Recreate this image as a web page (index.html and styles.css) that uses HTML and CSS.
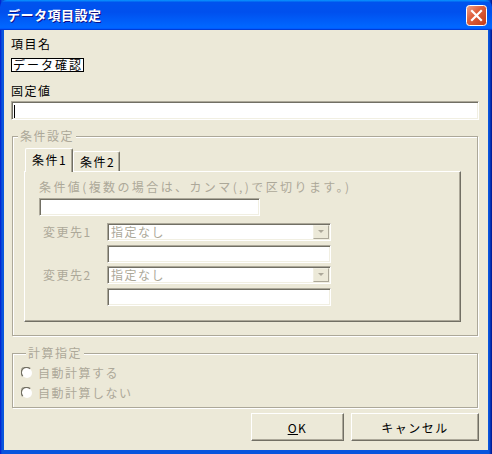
FILE: index.html
```html
<!DOCTYPE html>
<html lang="ja">
<head>
    <meta charset="UTF-8">
    <title>データ項目設定</title>
    <link rel="stylesheet" href="styles.css">
</head>
<body>
    <div class="window">
        <div class="titlebar">
            <span class="title">データ項目設定</span>
            <span class="close">
                <svg width="21" height="21" viewBox="0 0 21 21">
                    <defs>
                        <linearGradient id="cg" x1="0" y1="0" x2="1" y2="1">
                            <stop offset="0" stop-color="#F0A48C"/>
                            <stop offset="0.4" stop-color="#E0623F"/>
                            <stop offset="1" stop-color="#C33A16"/>
                        </linearGradient>
                    </defs>
                    <rect x="0.5" y="0.5" width="20" height="20" rx="3" fill="url(#cg)" stroke="#FFFFFF"/>
                    <path d="M6 6 L15 15 M15 6 L6 15" stroke="#FFFFFF" stroke-width="2.2" stroke-linecap="square"/>
                </svg>
            </span>
        </div>
        <div class="body">
            <div class="label">項目名</div>
            <div class="namebox">データ確認</div>
            <div class="label label-fixed">固定値</div>
            <div class="textbox fixed-input"><span class="caret"></span></div>

            <fieldset class="group cond-group">
                <legend>条件設定</legend>
                <div class="tabs">
                    <div class="tab active">条件1</div>
                    <div class="tab">条件2</div>
                </div>
                <div class="tab-panel">
                    <div class="note">条件値(複数の場合は、カンマ(,)で区切ります。)</div>
                    <div class="textbox cond-input"></div>
                    <div class="dest-row">
                        <span class="dest-label">変更先1</span>
                        <div class="dest-fields">
                            <div class="textbox combo"><span>指定なし</span><span class="drop"></span></div>
                            <div class="textbox dest-input"></div>
                        </div>
                    </div>
                    <div class="dest-row">
                        <span class="dest-label">変更先2</span>
                        <div class="dest-fields">
                            <div class="textbox combo"><span>指定なし</span><span class="drop"></span></div>
                            <div class="textbox dest-input"></div>
                        </div>
                    </div>
                </div>
            </fieldset>

            <fieldset class="group calc-group">
                <legend>計算指定</legend>
                <div class="radio">
                    <svg width="12" height="12" viewBox="0 0 12 12">
                        <circle cx="6" cy="6" r="5" fill="#FFFFFF"/>
                        <path d="M1.8 9 A5 5 0 0 1 9 1.8" fill="none" stroke="#716F64" stroke-width="1.3"/>
                        <path d="M1 9.5 A5.6 5.6 0 0 1 9.5 1" fill="none" stroke="#ACA899" stroke-width="0.8"/>
                    </svg>
                    <span>自動計算する</span>
                </div>
                <div class="radio">
                    <svg width="12" height="12" viewBox="0 0 12 12">
                        <circle cx="6" cy="6" r="5" fill="#FFFFFF"/>
                        <path d="M1.8 9 A5 5 0 0 1 9 1.8" fill="none" stroke="#716F64" stroke-width="1.3"/>
                        <path d="M1 9.5 A5.6 5.6 0 0 1 9.5 1" fill="none" stroke="#ACA899" stroke-width="0.8"/>
                    </svg>
                    <span>自動計算しない</span>
                </div>
            </fieldset>

            <div class="buttons">
                <button class="btn ok"><u>O</u>K</button>
                <button class="btn cancel">キャンセル</button>
            </div>
        </div>
    </div>
</body>
</html>
```

FILE: styles.css
```css
    body {
        margin: 0;
        width: 492px;
        height: 454px;
        overflow: hidden;
        font-family: "Noto Sans CJK JP", "Noto Sans", sans-serif;
        font-size: 12px;
        letter-spacing: 1.5px;
        color: #000000;
    }
    .window {
        width: 492px;
        height: 454px;
        background: linear-gradient(to right, #0019CF 0, #0855DD 2px, #0855DD 489px, #00138C 492px);
        display: flex;
        flex-direction: column;
    }
    .titlebar {
        height: 30px;
        flex: none;
        display: flex;
        justify-content: space-between;
        align-items: flex-start;
        padding: 0 5px 0 7px;
        background: linear-gradient(to bottom, #0997FF 0, #0053EE 8%, #0050EE 40%, #0066FF 88%, #0066FF 93%, #005BFF 95%, #003DD7 96%, #003DD7 100%);
        border-radius: 7px 7px 0 0;
    }
    .title {
        color: #ffffff;
        font-weight: bold;
        font-size: 13px;
        letter-spacing: 0.5px;
        line-height: 30px;
        text-shadow: 1px 1px #0F1089;
    }
    .close {
        margin-top: 5px;
        width: 21px;
        height: 21px;
    }
    .close svg {
        display: block;
    }
    .body {
        flex: 1;
        margin: 0 4px 4px 4px;
        padding: 7px 9px 0 7px;
        background-color: #ECE9D8;
        display: flex;
        flex-direction: column;
    }
    .label {
        line-height: 14px;
        height: 14px;
    }
    .namebox {
        align-self: flex-start;
        margin-top: 7px;
        height: 14px;
        box-sizing: border-box;
        border: 1px solid #000000;
        background: #ffffff;
        line-height: 12px;
        padding: 0 0 0 1px;
        letter-spacing: 2px;
    }
    .label-fixed {
        margin-top: 12px;
    }
    .textbox {
        box-sizing: border-box;
        background: #ffffff;
        border-top: 1px solid #ACA899;
        border-left: 1px solid #ACA899;
        border-right: 1px solid #FFFFFF;
        border-bottom: 1px solid #FFFFFF;
        box-shadow: inset 1px 1px 0 #716F64, inset -1px -1px 0 #F1EFE2;
    }
    .fixed-input {
        margin-top: 3px;
        height: 19px;
        padding: 3px 0 0 2px;
    }
    .caret {
        display: block;
        width: 1px;
        height: 13px;
        background: #000000;
    }
    .group {
        margin: 0 1px;
        padding: 0;
        border: 1px solid #ACA899;
        box-shadow: 1px 1px 0 #ffffff, inset 1px 1px 0 #ffffff;
        min-width: 0;
    }
    .group legend {
        margin-left: 5px;
        padding: 0 2px;
        line-height: 14px;
        color: #ACA899;
        background: #ECE9D8;
    }
    .cond-group {
        margin-top: 9px;
        padding-bottom: 13px;
    }
    .tabs {
        margin: 5px 0 0 12px;
        height: 23px;
        display: flex;
        align-items: flex-end;
        position: relative;
        z-index: 1;
    }
    .tab {
        box-sizing: border-box;
        height: 20px;
        width: 47px;
        padding: 3px 0 0 6px;
        line-height: 14px;
        background: #ECE9D8;
        border-top: 1px solid #ffffff;
        border-left: 1px solid #ffffff;
        border-right: 1px solid #716F64;
        border-radius: 2px 2px 0 0;
        box-shadow: inset -1px 0 0 #ACA899;
    }
    .tab.active {
        height: 24px;
        width: 48px;
        margin-bottom: -1px;
        padding: 4px 0 0 6px;
    }
    .tab-panel {
        box-sizing: border-box;
        width: 437px;
        height: 151px;
        margin-left: 11px;
        padding: 8px 0 0 14px;
        border-top: 1px solid #ffffff;
        border-left: 1px solid #ffffff;
        border-right: 1px solid #716F64;
        border-bottom: 1px solid #716F64;
        box-shadow: inset -1px -1px 0 #ACA899;
    }
    .note {
        line-height: 14px;
        color: #ACA899;
        letter-spacing: 2.4px;
        white-space: nowrap;
    }
    .cond-input {
        margin-top: 4px;
        width: 221px;
        height: 18px;
    }
    .dest-row {
        display: flex;
        margin-top: 7px;
    }
    .dest-row + .dest-row {
        margin-top: 3px;
    }
    .dest-label {
        width: 64px;
        margin-left: 4px;
        line-height: 18px;
        color: #ACA899;
    }
    .dest-fields {
        display: flex;
        flex-direction: column;
        gap: 4px;
    }
    .combo {
        width: 224px;
        height: 18px;
        display: flex;
        justify-content: space-between;
        align-items: center;
        padding: 0 1px 0 3px;
        color: #ACA899;
        line-height: 14px;
    }
    .drop {
        box-sizing: border-box;
        width: 16px;
        height: 14px;
        background: #ECE9D8;
        border-top: 1px solid #F1EFE2;
        border-left: 1px solid #F1EFE2;
        border-right: 1px solid #ACA899;
        border-bottom: 1px solid #ACA899;
        position: relative;
    }
    .drop::after {
        content: "";
        position: absolute;
        left: 4px;
        top: 4px;
        border-left: 3px solid transparent;
        border-right: 3px solid transparent;
        border-top: 3px solid #ACA899;
    }
    .dest-input {
        width: 224px;
        height: 18px;
    }
    .calc-group {
        margin-top: 10px;
        padding: 3px 0 4px 8px;
    }
    .radio {
        height: 20px;
        display: flex;
        align-items: center;
        gap: 5px;
        color: #ACA899;
        line-height: 14px;
    }
    .radio svg {
        display: block;
    }
    .buttons {
        display: flex;
        justify-content: flex-end;
        gap: 7px;
        margin-top: 5px;
    }
    .btn {
        box-sizing: border-box;
        height: 28px;
        font-family: "Noto Sans CJK JP", "Noto Sans", sans-serif;
        font-size: 12px;
        letter-spacing: 1.5px;
        color: #000000;
        background: #ECE9D8;
        border-top: 1px solid #ffffff;
        border-left: 1px solid #ffffff;
        border-right: 1px solid #716F64;
        border-bottom: 1px solid #716F64;
        box-shadow: inset -1px -1px 0 #ACA899;
        padding: 0;
    }
    .ok {
        width: 93px;
    }
    .cancel {
        width: 128px;
    }
```
